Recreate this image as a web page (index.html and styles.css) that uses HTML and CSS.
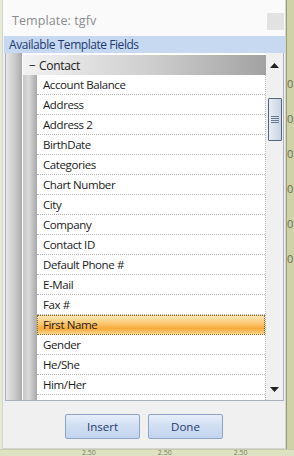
FILE: index.html
```html
<!DOCTYPE html>
<html>
<head>
<meta charset="utf-8">
<link rel="stylesheet" href="styles.css">
</head>
<body>
<div class="backdrop">
  <div class="dialog">
    <div class="titlebar">
      <span class="title">Template: tgfv</span>
      <span class="close"></span>
    </div>
    <div class="header">Available Template Fields</div>
    <div class="panel">
      <div class="gutter"></div>
      <div class="content">
        <div class="group"><span class="minus">−</span><span>Contact</span></div>
        <div class="children">
          <div class="indent"></div>
          <div class="rows">
            <div class="row">Account Balance</div>
            <div class="row">Address</div>
            <div class="row">Address 2</div>
            <div class="row">BirthDate</div>
            <div class="row">Categories</div>
            <div class="row">Chart Number</div>
            <div class="row">City</div>
            <div class="row">Company</div>
            <div class="row">Contact ID</div>
            <div class="row">Default Phone #</div>
            <div class="row">E-Mail</div>
            <div class="row">Fax #</div>
            <div class="row selected">First Name</div>
            <div class="row">Gender</div>
            <div class="row">He/She</div>
            <div class="row">Him/Her</div>
            <div class="row"></div>
          </div>
        </div>
      </div>
      <div class="scroll">
        <svg class="arrow" width="9" height="5" viewBox="0 0 9 5"><path d="M0 5 L4.5 0 L9 5 Z" fill="#222"/></svg>
        <div class="thumb">
          <svg width="8" height="7" viewBox="0 0 8 7"><path d="M0 0.5H8M0 2.5H8M0 4.5H8M0 6.5H8" stroke="#6a7a90" stroke-width="1"/></svg>
        </div>
        <div class="spacer"></div>
        <svg class="arrow" width="9" height="5" viewBox="0 0 9 5"><path d="M0 0 L4.5 5 L9 0 Z" fill="#222"/></svg>
      </div>
    </div>
    <div class="buttons">
      <button class="btn">Insert</button>
      <button class="btn">Done</button>
    </div>
  </div>
  <div class="sidestrip">
    <span>0</span><span>0</span><span>0</span><span>0</span><span>0</span><span>0</span>
  </div>
</div>
<div class="bottomstrip">
  <span>2.50</span><span>2.50</span><span>2.50</span>
</div>
</body>
</html>
```

FILE: styles.css
```css
* { box-sizing: border-box; }
html, body { margin: 0; padding: 0; }
body {
  width: 294px;
  height: 456px;
  overflow: hidden;
  background: #e6ead2;
  font-family: "Open Sans", "DejaVu Sans", sans-serif;
  font-size: 11px;
  color: #1a1a1a;
}
.backdrop {
  display: flex;
  height: 449px;
}
.dialog {
  margin-left: 2px;
  width: 284px;
  height: 449px;
  background: #f0f0f0;
  border: 1px solid #d4d4d4;
  border-top: none;
  display: flex;
  flex-direction: column;
}
.titlebar {
  height: 36px;
  background: #fafafa;
  display: flex;
  align-items: center;
  justify-content: space-between;
  padding: 0 0 0 9px;
}
.title {
  color: #8c8c8c;
  font-size: 12.5px;
  letter-spacing: 0.1px;
  margin-top: 4px;
}
.close {
  width: 17px;
  height: 17px;
  background: #e2e2e2;
  margin-right: 1px;
  margin-top: 7px;
}
.header {
  height: 17px;
  margin: 0 0 0 1px;
  background: #c6d9f0;
  color: #1f3a70;
  font-size: 12px;
  letter-spacing: -0.45px;
  line-height: 17px;
  padding-left: 5px;
}
.panel {
  margin: 0 1px 0 2px;
  height: 348px;
  border: 1px solid #a9b1ba;
  border-top: none;
  background: #fff;
  display: flex;
  overflow: hidden;
}
.gutter {
  width: 17px;
  background: linear-gradient(to right, #e6e6e6, #c8c8c8 60%, #a9a9a9);
  border-right: 1px solid #ffffff;
  flex: none;
}
.content {
  flex: 1;
  display: flex;
  flex-direction: column;
  min-width: 0;
}
.group {
  height: 22px;
  flex: none;
  background: linear-gradient(to right, #f2f2f2, #d0d0d0 50%, #a2a2a2);
  display: flex;
  align-items: center;
  font-size: 12px;
  letter-spacing: -0.3px;
  padding-left: 6px;
  border-top: 2px solid #fff;
}
.minus { width: 10px; margin-right: 0; }
.children {
  flex: 1;
  display: flex;
  min-height: 0;
}
.indent {
  width: 14px;
  flex: none;
  background: linear-gradient(to right, #c6c6c6, #dadada 40%, #a8a8a8);
}
.rows {
  flex: 1;
  display: flex;
  flex-direction: column;
  border-right: 1px dotted #b4b4b4;
}
.row {
  height: 20px;
  flex: none;
  line-height: 19px;
  padding-left: 6px;
  border-bottom: 1px dotted #b8b8b8;
  font-size: 11.5px;
  letter-spacing: -0.4px;
  white-space: nowrap;
}
.row.selected {
  background: linear-gradient(to bottom, #fde8b6 0%, #fbc46a 45%, #f8aa38 70%, #fcd48c 100%);
  border: 1px dotted #8a6a30;
  padding-left: 5px;
  line-height: 18px;
}
.scroll {
  width: 17px;
  flex: none;
  background: #f0f0f0;
  display: flex;
  flex-direction: column;
  align-items: center;
  padding: 10px 0 8px;
}
.arrow { flex: none; }
.thumb {
  margin-top: 30px;
  width: 14px;
  height: 43px;
  border: 1px solid #56667a;
  border-radius: 1px;
  background: linear-gradient(to right, #e8edf4, #c8d3e2);
  display: flex;
  align-items: center;
  justify-content: center;
}
.spacer { flex: 1; }
.buttons {
  flex: 1;
  display: flex;
  justify-content: center;
  align-items: flex-start;
  gap: 8px;
  padding-top: 13px;
}
.btn {
  width: 75px;
  height: 25px;
  border: 1px solid #8ea3c6;
  border-radius: 2px;
  background: linear-gradient(to bottom, #e6eefa, #d0def2 50%, #c3d4ee);
  color: #1f3a70;
  font-family: "Open Sans", "DejaVu Sans", sans-serif;
  font-size: 11.5px;
  padding: 0;
}
.sidestrip {
  flex: 1;
  height: 449px;
  background: #cfd2a6;
  border-left: 1px solid #9a9e7a;
  display: flex;
  flex-direction: column;
  gap: 20px;
  padding-top: 76px;
  color: #6c6e52;
  font-size: 11px;
  overflow: hidden;
}
.bottomstrip {
  height: 7px;
  background: #dde2c0;
  display: flex;
  gap: 62px;
  padding-left: 82px;
  color: #7a7c64;
  font-size: 7px;
  line-height: 6px;
  overflow: hidden;
  border-top: 1px solid #c8ccac;
}
```
